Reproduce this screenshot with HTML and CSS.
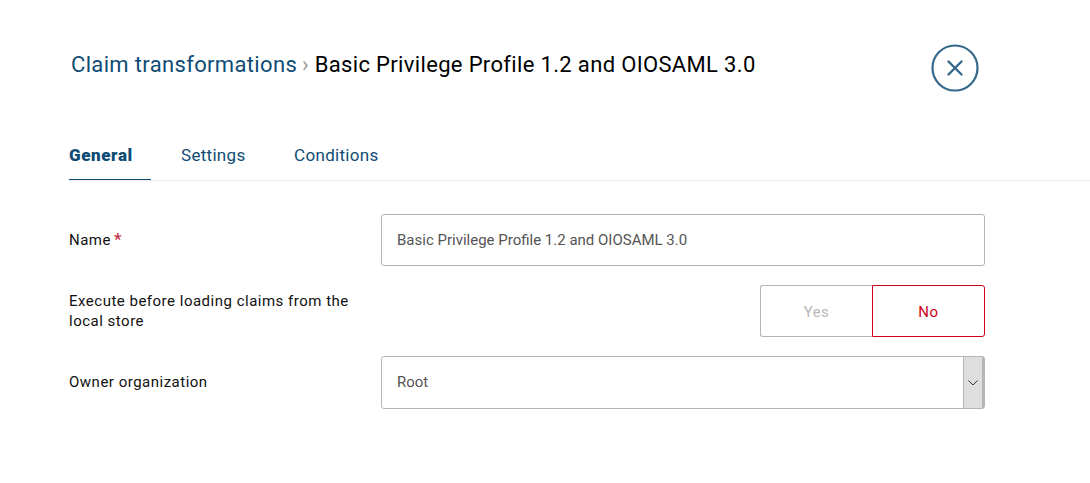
FILE: index.html
```html
<!DOCTYPE html>
<html lang="en">
<head>
    <meta charset="UTF-8">
    <title>Basic Privilege Profile 1.2 and OIOSAML 3.0</title>
    <link rel="stylesheet" href="styles.css">
</head>
<body>

<div class="dialog">
    <header class="dialog-header">
        <h1 class="breadcrumb">
            <a class="breadcrumb-link">Claim transformations</a>
            <span class="breadcrumb-sep">&rsaquo;</span>
            <span class="breadcrumb-current">Basic Privilege Profile 1.2 and OIOSAML 3.0</span>
        </h1>
        <button class="close-button" aria-label="Close">
            <svg width="48" height="48" viewBox="0 0 48 48">
                <circle cx="24" cy="24" r="22.5" fill="none" stroke="#35698c" stroke-width="2.2"/>
                <path d="M17.5 17.5 L30.5 30.5 M30.5 17.5 L17.5 30.5" fill="none" stroke="#35698c" stroke-width="2.4" stroke-linecap="round"/>
            </svg>
        </button>
    </header>

    <nav class="tabs">
        <a class="tab active">General</a>
        <a class="tab">Settings</a>
        <a class="tab">Conditions</a>
    </nav>

    <form class="form">
        <div class="form-row">
            <label class="form-label" for="name">Name<span class="required">*</span></label>
            <input class="form-input" id="name" type="text" value="Basic Privilege Profile 1.2 and OIOSAML 3.0">
        </div>
        <div class="form-row">
            <label class="form-label">Execute before loading claims from the local store</label>
            <div class="toggle">
                <span class="toggle-option">Yes</span>
                <span class="toggle-option selected">No</span>
            </div>
        </div>
        <div class="form-row">
            <label class="form-label owner-label" for="owner">Owner organization</label>
            <div class="select" id="owner">
                <span class="select-value">Root</span>
                <span class="select-arrow">
                    <svg width="10" height="6" viewBox="0 0 10 6">
                        <path d="M0.5 0.5 L5 5 L9.5 0.5" fill="none" stroke="#333" stroke-width="1"/>
                    </svg>
                </span>
            </div>
        </div>
    </form>
</div>

</body>
</html>
```

FILE: styles.css
```css
* {
    box-sizing: border-box;
}

body {
    margin: 0;
    background-color: #fff;
    font-family: 'Roboto', sans-serif;
    color: #111;
}

.dialog {
    padding: 44px 0 0 69px;
}

.dialog-header {
    display: flex;
    align-items: flex-start;
    justify-content: space-between;
    width: 909.5px;
    height: 48px;
}

.breadcrumb {
    margin: 6px 0 0 2px;
    font-size: 22px;
    font-weight: 400;
    line-height: 30px;
    letter-spacing: 0.34px;
    white-space: nowrap;
}

.breadcrumb-link {
    color: #0f4c75;
}

.breadcrumb-sep {
    color: #999;
    margin: 0 0 0 -1px;
}

.breadcrumb-current {
    color: #000;
}

.close-button {
    width: 48px;
    height: 48px;
    padding: 0;
    border: none;
    background: none;
    cursor: pointer;
}

.tabs {
    display: flex;
    height: 59px;
    margin-top: 30px;
    padding-top: 21px;
    border-bottom: 1px solid #eee;
}

.tab {
    height: 37px;
    margin-right: 48.6px;
    font-size: 17px;
    line-height: 24px;
    letter-spacing: 0.3px;
    color: #0f4c75;
}

.tab.active {
    width: 82px;
    margin-right: 30px;
    font-weight: 900;
    letter-spacing: 0.6px;
    border-bottom: 1px solid #0f4c75;
}

.form {
    display: flex;
    flex-direction: column;
    gap: 19px;
    width: 916px;
    margin-top: 33px;
}

.form-row {
    display: flex;
    align-items: center;
    justify-content: space-between;
    min-height: 52px;
}

.form-label {
    width: 290px;
    font-size: 15px;
    line-height: 20px;
    letter-spacing: 0.5px;
    color: #111;
}

.owner-label {
    padding-bottom: 1px;
}

.required {
    margin-left: 3px;
    color: #c0303c;
    font-size: 17px;
    font-weight: 500;
    line-height: 0;
}

.form-input,
.select {
    width: 604px;
    height: 52px;
    border: 1px solid #b5b5b5;
    border-radius: 3px;
    background: #fff;
    font-family: inherit;
    font-size: 15px;
    color: #555;
}

.form-input {
    padding: 0 15px;
    outline: none;
}

.toggle {
    display: flex;
    width: 225px;
    height: 52px;
}

.toggle-option {
    display: flex;
    flex: 1;
    align-items: center;
    justify-content: center;
    padding-top: 1px;
    border: 1px solid #b5b5b5;
    border-right: none;
    border-radius: 3px 0 0 3px;
    font-size: 15px;
    letter-spacing: 0.5px;
    color: #b8b8b8;
}

.toggle-option.selected {
    border: 1px solid #d0021b;
    border-radius: 0 3px 3px 0;
    color: #d0021b;
}

.select {
    display: flex;
    align-items: stretch;
    justify-content: space-between;
    height: 53px;
}

.select-value {
    padding: 0 15px;
    line-height: 50px;
}

.select-arrow {
    display: flex;
    width: 21px;
    align-items: center;
    justify-content: center;
    border-left: 1px solid #b5b5b5;
    border-right: 2px solid #b5b5b5;
    background-color: #dedede;
}
```
